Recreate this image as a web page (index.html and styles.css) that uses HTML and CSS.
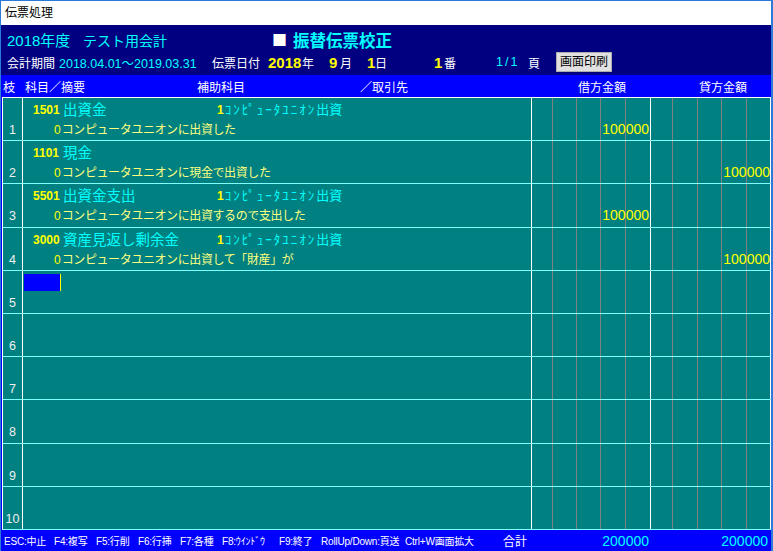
FILE: index.html
```html
<!DOCTYPE html>
<html lang="ja">
<head>
<meta charset="utf-8">
<title>伝票処理</title>
<link rel="stylesheet" href="styles.css">
</head>
<body>
<div class="window">
  <div class="titlebar">伝票処理</div>
  <div class="header">
    <div class="hrow1">
      <span class="fy">2018年度</span>
      <span class="book">テスト用会計</span>
      <span class="sq">■</span>
      <span class="mode">振替伝票校正</span>
    </div>
    <div class="hrow2">
      <span class="w52 lbl">会計期間</span>
      <span class="w153 period">2018.04.01〜2019.03.31</span>
      <span class="w56 lbl">伝票日付</span>
      <span class="w34 big">2018</span>
      <span class="w27 lbl">年</span>
      <span class="w11 big">9</span>
      <span class="w27 lbl">月</span>
      <span class="w8 big">1</span>
      <span class="w59 lbl">日</span>
      <span class="w10 big">1</span>
      <span class="w52 lbl">番</span>
      <span class="w32 page">1/1</span>
      <span class="w28 lbl">頁</span>
      <button class="btn">画面印刷</button>
    </div>
  </div>
  <div class="colhead">
    <span class="c22">枝</span>
    <span class="c172">科目／摘要</span>
    <span class="c163">補助科目</span>
    <span class="c218">／取引先</span>
    <span class="c121">借方金額</span>
    <span>貸方金額</span>
  </div>
  <div class="grid">
    <div class="row">
      <div class="num">1</div>
      <div class="main">
        <div class="l1"><span class="code">1501</span><span class="acct">出資金</span><span class="sub"><b>1</b><span class="hw">ｺﾝﾋﾟｭｰﾀﾕﾆｵﾝ</span>出資</span></div>
        <div class="l2"><b>0</b>コンピュータユニオンに出資した</div>
      </div>
      <div class="dr"><span class="amt">100000</span></div>
      <div class="cr"></div>
    </div>
    <div class="row">
      <div class="num">2</div>
      <div class="main">
        <div class="l1"><span class="code">1101</span><span class="acct">現金</span></div>
        <div class="l2"><b>0</b>コンピュータユニオンに現金で出資した</div>
      </div>
      <div class="dr"></div>
      <div class="cr"><span class="amt">100000</span></div>
    </div>
    <div class="row">
      <div class="num">3</div>
      <div class="main">
        <div class="l1"><span class="code">5501</span><span class="acct">出資金支出</span><span class="sub"><b>1</b><span class="hw">ｺﾝﾋﾟｭｰﾀﾕﾆｵﾝ</span>出資</span></div>
        <div class="l2"><b>0</b>コンピュータユニオンに出資するので支出した</div>
      </div>
      <div class="dr"><span class="amt">100000</span></div>
      <div class="cr"></div>
    </div>
    <div class="row">
      <div class="num">4</div>
      <div class="main">
        <div class="l1"><span class="code">3000</span><span class="acct">資産見返し剰余金</span><span class="sub"><b>1</b><span class="hw">ｺﾝﾋﾟｭｰﾀﾕﾆｵﾝ</span>出資</span></div>
        <div class="l2"><b>0</b>コンピュータユニオンに出資して「財産」が</div>
      </div>
      <div class="dr"></div>
      <div class="cr"><span class="amt">100000</span></div>
    </div>
    <div class="row">
      <div class="num">5</div>
      <div class="main"><div class="input"></div></div>
      <div class="dr"></div>
      <div class="cr"></div>
    </div>
    <div class="row">
      <div class="num">6</div>
      <div class="main"></div>
      <div class="dr"></div>
      <div class="cr"></div>
    </div>
    <div class="row">
      <div class="num">7</div>
      <div class="main"></div>
      <div class="dr"></div>
      <div class="cr"></div>
    </div>
    <div class="row">
      <div class="num">8</div>
      <div class="main"></div>
      <div class="dr"></div>
      <div class="cr"></div>
    </div>
    <div class="row">
      <div class="num">9</div>
      <div class="main"></div>
      <div class="dr"></div>
      <div class="cr"></div>
    </div>
    <div class="row">
      <div class="num">10</div>
      <div class="main"></div>
      <div class="dr"></div>
      <div class="cr"></div>
    </div>
  </div>
  <div class="footer">
    <span class="f50">ESC:中止</span>
    <span class="f42">F4:複写</span>
    <span class="f42">F5:行削</span>
    <span class="f42">F6:行挿</span>
    <span class="f42">F7:各種</span>
    <span class="f57">F8:ｳｲﾝﾄﾞｳ</span>
    <span class="f42">F9:終了</span>
    <span class="f84">RollUp/Down:頁送</span>
    <span class="f98">Ctrl+W画面拡大</span>
    <span class="f28 total-lbl">合計</span>
    <span class="tot1">200000</span>
    <span class="tot2">200000</span>
  </div>
</div>
</body>
</html>
```

FILE: styles.css
```css
* { box-sizing: border-box; }
html, body { margin: 0; padding: 0; }
body {
  width: 773px;
  height: 551px;
  overflow: hidden;
  font-family: "Liberation Sans", "Noto Sans CJK JP", sans-serif;
  background: #ffffff;
}
.window {
  width: 773px;
  height: 551px;
  border-top: 1px solid #2b79d8;
  border-left: 1px solid #2b79d8;
  border-right: 2px solid #2b79d8;
  background: #0000ff;
  display: flex;
  flex-direction: column;
}
.titlebar {
  height: 24px;
  flex: none;
  background: #ffffff;
  color: #000000;
  font-size: 12px;
  line-height: 24px;
  padding-left: 4px;
}
.header {
  height: 50px;
  flex: none;
  background: #000080;
}
.hrow1 {
  height: 26px;
  padding-top: 3px;
  padding-left: 6px;
  display: flex;
  align-items: center;
  white-space: nowrap;
}
.fy { width: 76px; color: #00ffff; font-size: 15px; }
.book { width: 189px; color: #00ffff; font-size: 14px; }
.sq {
  width: 21px;
  color: #ffffff;
  font-family: "Noto Sans CJK JP", sans-serif;
  font-size: 15px;
}
.mode { color: #00ffff; font-size: 16.5px; font-weight: bold; }

.hrow2 {
  height: 24px;
  padding-bottom: 2px;
  padding-left: 6px;
  display: flex;
  align-items: center;
  white-space: nowrap;
  font-size: 12px;
}
.hrow2 > span { flex: none; }
.lbl { color: #ffffff; }
.period { color: #00ffff; font-size: 12.5px; }
.big { color: #ffff00; font-size: 15px; font-weight: bold; }
.page { color: #00ffff; font-size: 12.5px; letter-spacing: 2px; }
.w8 { width: 8px; } .w10 { width: 10px; } .w11 { width: 11px; }
.w27 { width: 27px; } .w28 { width: 28px; } .w32 { width: 32px; }
.w34 { width: 34px; } .w52 { width: 52px; } .w56 { width: 56px; }
.w59 { width: 59px; } .w153 { width: 153px; }
.btn {
  width: 56px;
  height: 20px;
  margin: 0;
  padding: 0;
  background: #e1e1e1;
  border: 1px solid #adadad;
  color: #000000;
  font-family: "Liberation Sans", "Noto Sans CJK JP", sans-serif;
  font-size: 12px;
  line-height: 18px;
  text-align: center;
}

.colhead {
  height: 22px;
  flex: none;
  background: #0000ff;
  color: #ffffff;
  font-size: 12px;
  display: flex;
  align-items: center;
  padding-left: 2px;
  white-space: nowrap;
}
.colhead > span { flex: none; }
.c22 { width: 22px; } .c172 { width: 172px; } .c163 { width: 163px; }
.c218 { width: 218px; } .c121 { width: 121px; }

.grid {
  height: 433px;
  flex: none;
  margin-left: 1px;
  width: 769px;
  background: #008080;
  border-top: 1px solid #ffffff;
  display: flex;
  flex-direction: column;
}
.row {
  flex: 1 1 0;
  min-height: 0;
  overflow: hidden;
  display: flex;
  border-bottom: 1px solid #80ffff;
  border-left: 1px solid #ffffff;
}
.num {
  width: 20px;
  flex: none;
  border-right: 1px solid #ffffff;
  color: #f0f0f0;
  font-size: 12.5px;
  line-height: 15px;
  padding-top: 25px;
  text-align: center;
}
.main {
  width: 509px;
  flex: none;
  border-right: 1px solid #ffffff;
  white-space: nowrap;
}
.dr, .cr {
  flex: none;
  border-right: 1px solid #ffffff;
  background-image: linear-gradient(#808080, #808080), linear-gradient(#808080, #808080), linear-gradient(#808080, #808080), linear-gradient(#808080, #808080);
  background-size: 1px 100%;
  background-repeat: no-repeat;
  display: flex;
  justify-content: flex-end;
  align-items: flex-start;
  padding-top: 24px;
}
.dr {
  width: 119px;
  background-position: 20px 0, 44px 0, 68px 0, 93px 0;
  padding-right: 1px;
}
.cr {
  width: 120px;
  background-position: 21px 0, 46px 0, 70px 0, 95px 0;
  padding-right: 0;
}
.amt {
  color: #ffff00;
  font-size: 14px;
  line-height: 15px;
}
.l1 {
  margin-top: 3px;
  height: 18px;
  line-height: 18px;
  display: flex;
  align-items: center;
  padding-left: 10px;
}
.code {
  width: 30px;
  flex: none;
  color: #ffff00;
  font-size: 12px;
  font-weight: bold;
}
.acct {
  width: 154px;
  flex: none;
  color: #00ffff;
  font-size: 14.5px;
}
.sub {
  color: #00ffff;
  font-size: 13px;
}
.sub b {
  color: #ffff00;
  font-size: 12px;
  font-weight: bold;
  margin-right: 1px;
}
.hw { letter-spacing: 2px; }
.l2 {
  height: 20px;
  line-height: 20px;
  margin-top: 1px;
  padding-left: 31px;
  color: #ffff80;
  font-size: 12px;
  letter-spacing: -0.4px;
}
.l2 b {
  color: #ffff00;
  font-weight: normal;
  letter-spacing: 0;
  margin-right: 1px;
}
.input {
  margin-top: 3px;
  margin-left: 1px;
  width: 37px;
  height: 17px;
  background: #0000ff;
  border-right: 1px solid #ffff00;
}

.footer {
  flex: 1 1 auto;
  background: #0000ff;
  color: #ffffff;
  font-size: 10px;
  display: flex;
  align-items: center;
  padding-left: 3px;
  white-space: nowrap;
  letter-spacing: -0.2px;
}
.footer > span { flex: none; }
.f28 { width: 28px; } .f42 { width: 42px; } .f50 { width: 50px; }
.f57 { width: 57px; } .f84 { width: 84px; } .f98 { width: 98px; }
.total-lbl { font-size: 12px; letter-spacing: 0; }
.tot1, .tot2 {
  color: #00ffff;
  font-size: 14px;
  text-align: right;
  letter-spacing: 0;
}
.tot1 { width: 118px; }
.tot2 { width: 119px; }
```
